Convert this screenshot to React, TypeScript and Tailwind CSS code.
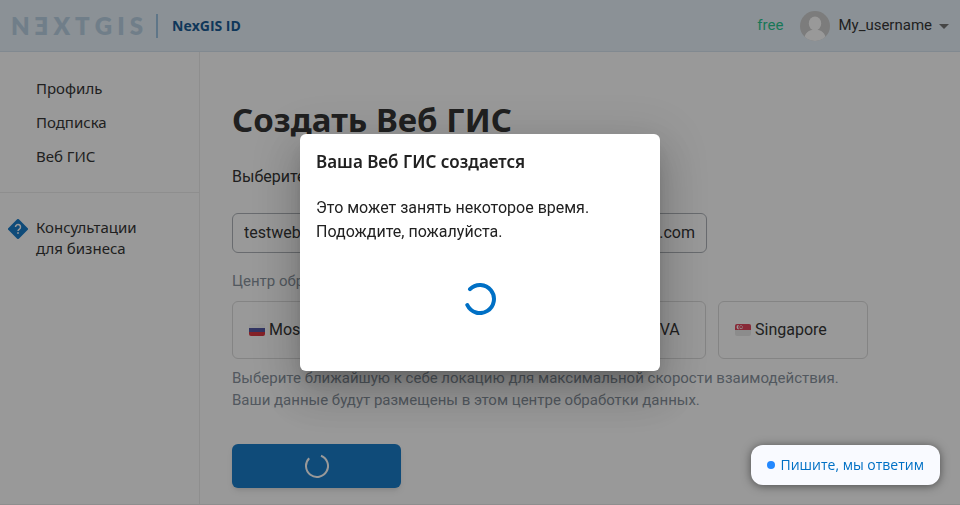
import { useState } from "react";

const LOGO_LETTERS = ["N", "Ǝ", "X", "T", "G", "I", "S"];

function RussiaFlag() {
  return (
    <svg viewBox="0 0 16 12" className="h-3 w-4 shrink-0 rounded-xs" aria-hidden="true">
      <rect width="16" height="4" fill="#f5f5f5" />
      <rect y="4" width="16" height="4" fill="#41479b" />
      <rect y="8" width="16" height="4" fill="#d8232f" />
    </svg>
  );
}

function FinlandFlag() {
  return (
    <svg viewBox="0 0 16 12" className="h-3 w-4 shrink-0 rounded-xs" aria-hidden="true">
      <rect width="16" height="12" fill="#f5f5f5" />
      <path d="M0 6h16M5.5 0v12" stroke="#2e52b2" strokeWidth="2.5" />
    </svg>
  );
}

function UsaFlag() {
  return (
    <svg viewBox="0 0 16 12" className="h-3 w-4 shrink-0 rounded-xs" aria-hidden="true">
      <rect width="16" height="12" fill="#f5f5f5" />
      <path d="M0 1h16M0 4h16M0 7h16M0 10h16" stroke="#d8232f" strokeWidth="1.5" />
      <rect width="8" height="6" fill="#2e52b2" />
    </svg>
  );
}

function SingaporeFlag() {
  return (
    <svg viewBox="0 0 16 12" className="h-3 w-4 shrink-0 rounded-xs" aria-hidden="true">
      <rect width="16" height="12" fill="#e8e8e8" />
      <rect width="16" height="6" fill="#e0304a" />
      <path d="M4 .9A2.200 2.200 0 1 0 4.400 5.200 2.800 2.800 0 0 1 4 .9Z" fill="#fff" />
      <path
        d="M5.500 1h1v1h-1zM4.300 2.400h1v1h-1zM6.900 2.400h1v1h-1zM4.800 4h1v1h-1zM6.300 4h1v1h-1z"
        fill="#fff"
      />
    </svg>
  );
}

const LOCATIONS = [
  { name: "Moscow", Flag: RussiaFlag },
  { name: "Helsinki", Flag: FinlandFlag },
  { name: "Ashburn, VA", Flag: UsaFlag },
  { name: "Singapore", Flag: SingaporeFlag },
];

function Header() {
  return (
    <header className="flex h-[52px] items-center border-b border-[#d2e2ee] bg-[#e5f1f9] pr-1 pl-[11px]">
      <a
        href="#"
        aria-label="NEXTGIS"
        className="flex w-[132px] justify-between font-['Lato',sans-serif] text-2xl leading-8 font-extrabold text-[#b4cde2]"
      >
        {LOGO_LETTERS.map((letter) => (
          <span key={letter}>{letter}</span>
        ))}
      </a>
      <span className="ml-[13px] h-6 w-0.5 bg-[#94bfe0]" />
      <a href="#" className="ml-3.5 pt-px font-['Open_Sans',sans-serif] text-sm font-bold text-[#004a8b]">
        NexGIS ID
      </a>
      <span className="ml-auto text-[15px] text-[#10c187]">free</span>
      <button type="button" className="ml-[17px] flex items-center text-[15px]">
        <svg viewBox="0 0 30 30" className="mr-2 size-[30px]" aria-hidden="true">
          <clipPath id="avatar">
            <circle cx="15" cy="15" r="15" />
          </clipPath>
          <g clipPath="url(#avatar)">
            <rect width="30" height="30" fill="#c9c9c9" />
            <ellipse cx="15" cy="12.5" rx="6.2" ry="7" fill="#fff" />
            <path d="M4 30C4 22 9 18.5 15 18.5S26 22 26 30Z" fill="#fff" />
          </g>
        </svg>
        My_username
        <svg viewBox="0 0 24 24" className="size-6 text-[#666]" aria-hidden="true">
          <path d="M7 10l5 5 5-5z" fill="currentColor" />
        </svg>
      </button>
    </header>
  );
}

function Sidebar() {
  return (
    <nav className="w-[200px] shrink-0 border-r border-[#ebebeb] font-['Noto_Sans',sans-serif] text-[15px]">
      <ul className="flex flex-col gap-[2px] border-b border-[#ebebeb] pt-5 pb-5 pl-9">
        {["Профиль", "Подписка", "Веб ГИС"].map((item) => (
          <li key={item}>
            <a href="#" className="block leading-8">
              {item}
            </a>
          </li>
        ))}
      </ul>
      <a href="#" className="flex pt-6 pl-2 leading-[21px]">
        <svg viewBox="0 0 20 20" className="mt-0.5 mr-2 size-5" aria-hidden="true">
          <path
            d="M8.9.5a1.5 1.5 0 0 1 2.2 0l8.4 8.4a1.5 1.5 0 0 1 0 2.2l-8.4 8.4a1.5 1.5 0 0 1-2.2 0L.5 11.1a1.5 1.5 0 0 1 0-2.2Z"
            fill="#0070c5"
          />
          <path
            d="M7.5 8a2.500 2.500 0 1 1 3.900 2.050c-.9.6-1.400 1-1.400 2"
            fill="none"
            stroke="#fff"
            strokeWidth="1.5"
          />
          <rect x="9.2" y="13.2" width="1.6" height="1.6" fill="#fff" />
        </svg>
        <span>
          Консультации
          <br />
          для бизнеса
        </span>
      </a>
    </nav>
  );
}

function CreateForm() {
  const [name, setName] = useState("testwebgis");
  return (
    <main className="min-w-0 grow px-8 pt-12 pb-4">
      <h1 className="font-['Noto_Sans',sans-serif] text-[33px] leading-10 font-bold">Создать Веб ГИС</h1>
      <label htmlFor="gis-name" className="mt-[25px] block leading-6">
        Выберите адрес Веб ГИС
      </label>
      <div className="mt-6 flex h-10 max-w-[475px] items-center rounded-md border border-[#a6abb1] px-[11px]">
        <input
          id="gis-name"
          value={name}
          onChange={(e) => setName(e.target.value)}
          className="min-w-0 grow bg-transparent outline-none"
        />
        <span>.nextgis.com</span>
      </div>
      <p className="mt-[17px] text-[15px] leading-[22px] text-[#7c8894]">Центр обработки данных</p>
      <div className="mt-[9px] flex flex-wrap gap-3">
        {LOCATIONS.map(({ name: city, Flag }) => (
          <button
            key={city}
            type="button"
            className="flex h-[58px] w-[150px] items-center gap-1 rounded-md border border-[#d8d8d8] px-4 whitespace-nowrap"
          >
            <Flag />
            {city}
          </button>
        ))}
      </div>
      <p className="mt-2 text-[15px] leading-[22px] text-[#7c8894]">
        Выберите ближайшую к себе локацию для максимальной скорости взаимодействия.
        <br />
        Ваши данные будут размещены в этом центре обработки данных.
      </p>
      <button
        type="button"
        aria-label="Создать"
        className="mt-[33px] flex h-11 w-[169px] items-center justify-center rounded-md bg-[#0070c5] shadow-md"
      >
        <svg viewBox="0 0 24 24" className="size-6" aria-hidden="true">
          <path d="M16 1.700A11 11 0 1 1 4.200 4.200" fill="none" stroke="#fff" strokeWidth="2" />
        </svg>
      </button>
    </main>
  );
}

function ProgressDialog() {
  return (
    <div className="fixed inset-0 flex items-center justify-center bg-[#212121]/46">
      <div
        role="dialog"
        aria-labelledby="dialog-title"
        className="w-[360px] rounded-md bg-white px-4 pt-3.5 pb-14 shadow-[0_11px_15px_-7px_rgba(0,0,0,0.2),0_24px_38px_3px_rgba(0,0,0,0.14),0_9px_46px_8px_rgba(0,0,0,0.12)]"
      >
        <h2 id="dialog-title" className="font-['Noto_Sans',sans-serif] text-[17px] leading-7 font-semibold">
          Ваша Веб ГИС создается
        </h2>
        <p className="mt-5 leading-6">
          Это может занять некоторое время.
          <br />
          Подождите, пожалуйста.
        </p>
        <svg viewBox="0 0 32 32" className="mx-auto mt-[39px] size-8" aria-hidden="true">
          <path
            d="M6 6.200A14 14 0 1 1 3.300 22"
            fill="none"
            stroke="#0070c5"
            strokeWidth="4"
            strokeLinecap="round"
          />
        </svg>
      </div>
    </div>
  );
}

function ChatButton() {
  return (
    <button
      type="button"
      className="fixed right-5 bottom-5 flex h-10 items-center gap-1.5 rounded-xl bg-[#f9faff] px-4 font-['Open_Sans',sans-serif] text-sm text-[#0070c5] shadow-[0_1px_10px_rgba(0,0,0,0.5)]"
    >
      <span className="size-2 rounded-full bg-[#2388ff]" />
      Пишите, мы ответим
    </button>
  );
}

export default function App() {
  return (
    <div className="flex min-h-screen flex-col border-b border-[#ebebeb] bg-white font-['Roboto',sans-serif] text-base text-[#212121]">
      <Header />
      <div className="flex grow">
        <Sidebar />
        <CreateForm />
      </div>
      <ProgressDialog />
      <ChatButton />
    </div>
  );
}
